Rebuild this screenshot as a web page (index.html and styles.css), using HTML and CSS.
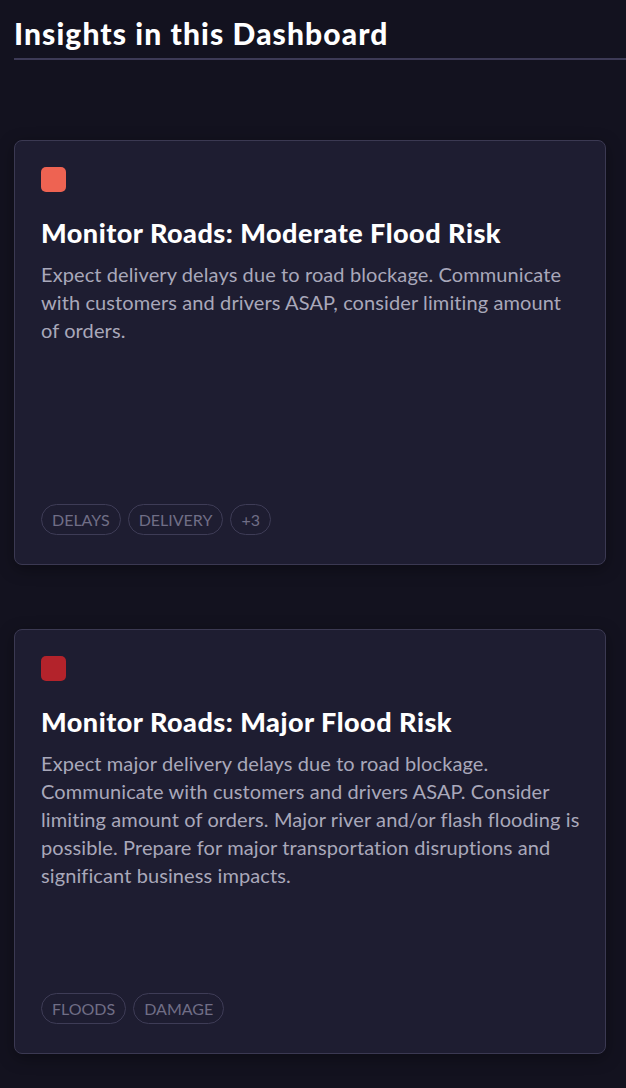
FILE: index.html
```html
<!DOCTYPE html>
<html lang="en">

<head>
  <meta charset="UTF-8" />
  <meta name="viewport" content="width=device-width, initial-scale=1.0" />
  <title>Insights</title>
  <link rel="stylesheet" href="styles.css">
</head>

<body>
  <div class="insights">
    <h2 class="insights-title">Insights in this Dashboard</h2>

    <div class="insight-list">
      <div class="insight-card">
        <span class="severity severity-moderate"></span>
        <h3 class="insight-name">Monitor Roads: Moderate Flood Risk</h3>
        <p class="insight-text">Expect delivery delays due to road blockage. Communicate with customers and drivers ASAP, consider limiting amount of orders.</p>
        <div class="tags">
          <span class="tag">Delays</span>
          <span class="tag">Delivery</span>
          <span class="tag">+3</span>
        </div>
      </div>

      <div class="insight-card">
        <span class="severity severity-major"></span>
        <h3 class="insight-name">Monitor Roads: Major Flood Risk</h3>
        <p class="insight-text">Expect major delivery delays due to road blockage. Communicate with customers and drivers ASAP. Consider limiting amount of orders. Major river and/or flash flooding is possible. Prepare for major transportation disruptions and significant business impacts.</p>
        <div class="tags">
          <span class="tag">Floods</span>
          <span class="tag">Damage</span>
        </div>
      </div>
    </div>
  </div>
</body>

</html>
```

FILE: styles.css
```css
body {
  margin: 0;
  background: #13121f;
  font-family: Lato, "Open Sans", sans-serif;
  color: #fff;
}

.insights {
  padding: 16px 0 0 14px;
}

.insights-title {
  margin: 0;
  padding-bottom: 8px;
  font-size: 30px;
  font-weight: 900;
  line-height: 34px;
  letter-spacing: 1.1px;
  border-bottom: 2px solid #3d3a56;
}

.insight-list {
  display: flex;
  flex-direction: column;
  gap: 64px;
  padding: 80px 20px 30px 0;
}

.insight-card {
  display: flex;
  flex-direction: column;
  height: 425px;
  box-sizing: border-box;
  padding: 26px 24px 29px 26px;
  background: #1e1d31;
  border: 1px solid #3b3952;
  border-radius: 8px;
  box-shadow: 0 4px 16px rgba(0, 0, 0, 0.35);
}

.severity {
  width: 25px;
  height: 25px;
  border-radius: 5px;
}

.severity-moderate {
  background: #ee6352;
}

.severity-major {
  background: #b3232b;
}

.insight-name {
  margin: 25px 0 0;
  font-size: 27px;
  font-weight: 900;
  line-height: 32px;
  letter-spacing: 0.5px;
}

.insight-text {
  margin: 11px 0 0;
  font-size: 20px;
  line-height: 28px;
  letter-spacing: 0.1px;
  color: #a9a8ba;
}

.tags {
  display: flex;
  gap: 7px;
  margin-top: auto;
}

.tag {
  padding: 0 10px;
  height: 29px;
  line-height: 29px;
  border: 1px solid #3e3c56;
  border-radius: 16px;
  font-size: 16px;
  text-transform: uppercase;
  color: #706e86;
}
```
